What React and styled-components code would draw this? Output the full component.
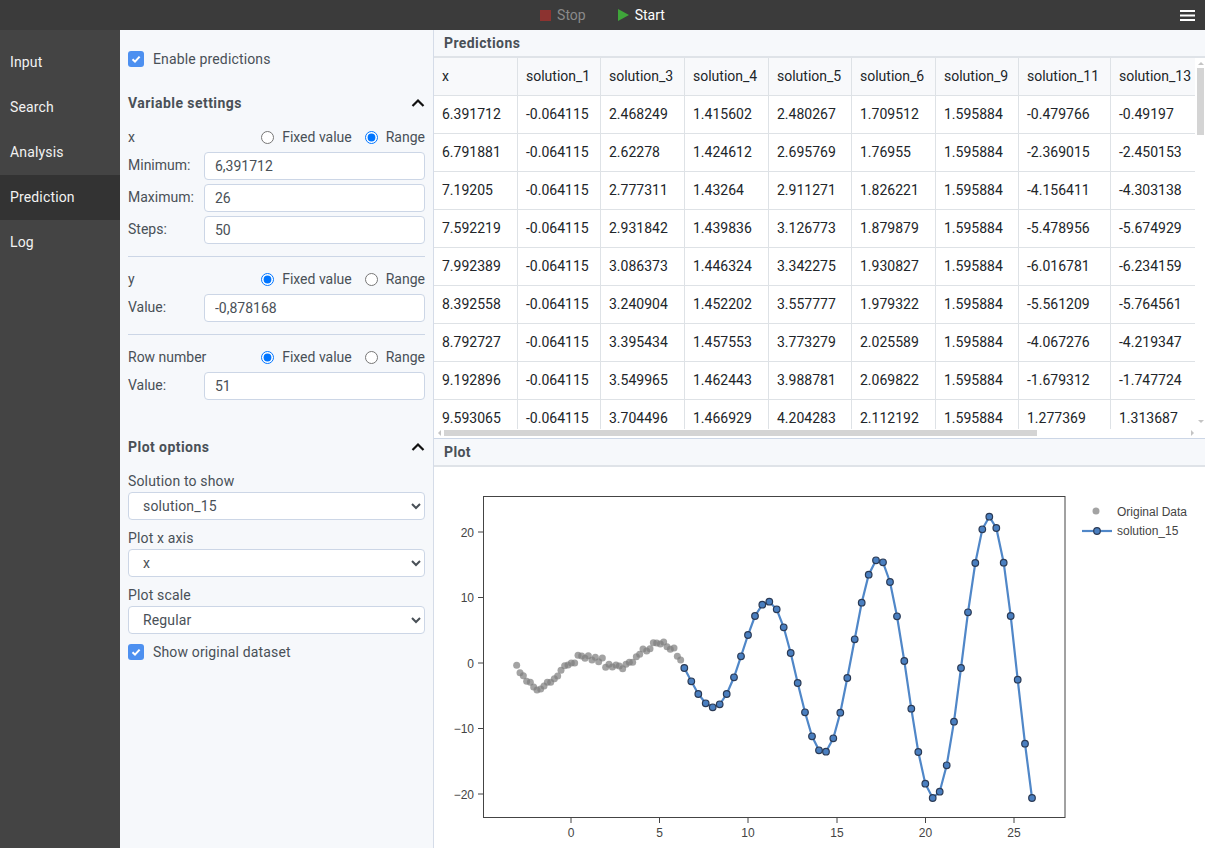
import React from "react";
import { createGlobalStyle, styled } from "styled-components";

const GlobalStyle = createGlobalStyle`
  html, body {
    margin: 0;
    height: 100%;
    overflow: hidden;
    font-family: Roboto, "Noto Sans", sans-serif;
    font-size: 14px;
  }
  * { box-sizing: border-box; }
`;

const Page = styled.div`
  width: 1205px;
  height: 848px;
  display: grid;
  grid-template-rows: 30px 1fr;
  grid-template-columns: 120px 314px 1fr;
`;

/* top bar */
const TopBar = styled.header`
  grid-column: 1 / -1;
  display: grid;
  grid-template-columns: 1fr auto 1fr;
  align-items: center;
  background: #3b3b3b;
`;

const RunControls = styled.div`
  grid-column: 2;
  display: flex;
  gap: 32px;
`;

const RunButton = styled.div`
  display: flex;
  align-items: center;
  gap: 6px;
  color: ${(p) => (p.$disabled ? "#8a8a8a" : "#fff")};
  font-size: 14px;
`;

const StopIcon = styled.span`
  width: 11px;
  height: 11px;
  background: #8c3330;
`;

const PlayIcon = styled.span`
  width: 0;
  height: 0;
  border-left: 11px solid #3fa53a;
  border-top: 6.5px solid transparent;
  border-bottom: 6.5px solid transparent;
`;

const MenuButton = styled.svg`
  justify-self: end;
  margin-right: 10px;
  display: block;
`;

/* side nav */
const Nav = styled.nav`
  background: #444444;
  padding-top: 10px;
`;

const NavItem = styled.div`
  height: 45px;
  padding: 0 0 2px 10px;
  display: flex;
  align-items: center;
  color: #f2f2f2;
  letter-spacing: 0.15px;
  background: ${(p) => (p.$active ? "#333333" : "transparent")};
`;

/* settings column */
const Settings = styled.aside`
  background: #f6f8fb;
  border-right: 1px solid #d5dce8;
  padding: 18px 8px 0;
  color: #495057;
`;

const CheckRow = styled.div`
  display: flex;
  align-items: center;
  gap: 9px;
  height: 22px;
  letter-spacing: 0.15px;
  margin-top: ${(p) => p.$top || 0}px;
`;

const CheckBox = styled.span`
  width: 16px;
  height: 16px;
  border-radius: 3px;
  background: #4d90f0;
  display: flex;
  align-items: center;
  justify-content: center;
`;

const SectionTitle = styled.div`
  display: flex;
  align-items: center;
  justify-content: space-between;
  height: 22px;
  font-weight: 700;
  letter-spacing: 0.45px;
  margin-top: ${(p) => p.$top}px;
  margin-bottom: 12px;
`;

const VarRow = styled.div`
  display: flex;
  align-items: center;
  justify-content: space-between;
  height: 22px;
  margin-bottom: 4px;
`;

const RadioGroup = styled.div`
  display: flex;
  align-items: center;
  gap: 13px;
`;

const RadioLabel = styled.label`
  display: flex;
  align-items: center;
  gap: 8px;
`;

const Radio = styled.input`
  width: 13px;
  height: 13px;
  margin: 0;
`;

const FieldRow = styled.div`
  display: grid;
  grid-template-columns: 76px 1fr;
  align-items: center;
  margin-bottom: 4px;
`;

const FieldLabel = styled.span`
  padding-bottom: 2px;
`;

const TextInput = styled.input`
  height: 28px;
  width: 100%;
  padding: 0 10px;
  border: 1px solid #ccd6e6;
  border-radius: 4px;
  background: #fff;
  color: #495057;
  font: inherit;
`;

const Divider = styled.hr`
  margin: 12px 0 11px;
  border: 0;
  border-top: 1px solid #ccd6e6;
`;

const SelectLabel = styled.div`
  height: 22px;
  display: flex;
  align-items: center;
  letter-spacing: 0.15px;
`;

const Select = styled.select`
  display: block;
  width: 100%;
  height: 28px;
  padding: 0 6px 0 10px;
  margin-bottom: 7px;
  border: 1px solid #ccd6e6;
  border-radius: 4px;
  background: #fff;
  color: #495057;
  font: inherit;
  letter-spacing: 0.15px;
`;

/* right column */
const Results = styled.main`
  display: grid;
  grid-template-rows: 408px 1fr;
  min-width: 0;
  min-height: 0;
`;

const Pane = styled.section`
  display: flex;
  flex-direction: column;
  min-height: 0;
  min-width: 0;
  border-top: ${(p) => (p.$ruled ? "1px solid #ccd6e6" : "none")};
`;

const PaneTitle = styled.div`
  flex: none;
  height: 28px;
  padding-left: 10px;
  display: flex;
  align-items: center;
  font-weight: 700;
  letter-spacing: 0.4px;
  color: #495057;
  background: #f6f8fb;
  border-bottom: 2px solid #dfe3e8;
`;

const TableFrame = styled.div`
  flex: 1;
  min-height: 0;
  display: grid;
  grid-template-columns: 1fr 8px;
  grid-template-rows: 1fr 9px;
`;

const TableClip = styled.div`
  overflow: hidden;
  min-height: 0;
`;

const Table = styled.table`
  border-collapse: separate;
  border-spacing: 0;
  table-layout: fixed;
  width: 761px;
  color: #212529;
`;

const HeadCell = styled.th`
  height: 38px;
  padding: 0 8px 2px;
  text-align: left;
  font-weight: 400;
  white-space: nowrap;
  background: #f8f9fb;
  border-right: 1px solid #dee2e6;
  border-bottom: 1px solid #dee2e6;
  &:last-child { border-right: 0; }
`;

const Cell = styled.td`
  height: 38px;
  padding: 0 8px 2px;
  white-space: nowrap;
  border-right: 1px solid #dee2e6;
  border-bottom: 1px solid #dee2e6;
  &:last-child { border-right: 0; }
`;

const VScrollBar = styled.div`
  display: flex;
  flex-direction: column;
  align-items: stretch;
  padding-right: 1px;
  padding-bottom: 3px;
`;

const HScrollBar = styled.div`
  display: flex;
  align-items: stretch;
  padding: 1px 0 2px;
`;

const Thumb = styled.div`
  flex: none;
  background: #d4d4d4;
  ${(p) => (p.$vertical ? `height: ${p.$size}px;` : `width: ${p.$size}px;`)}
`;

const Track = styled.div`
  flex: 1;
`;

const ArrowButton = styled.div`
  flex: none;
  width: ${(p) => (p.$dir === "up" || p.$dir === "down" ? "auto" : "10px")};
  height: ${(p) => (p.$dir === "up" || p.$dir === "down" ? "10px" : "auto")};
  display: flex;
  align-items: center;
  justify-content: center;

  &::before {
    content: "";
    border: 3px solid transparent;
    ${(p) => (p.$dir === "up" ? "border-top: 0; border-bottom: 3px solid #c4c4c4;" : "")}
    ${(p) => (p.$dir === "down" ? "border-bottom: 0; border-top: 3px solid #c4c4c4;" : "")}
    ${(p) => (p.$dir === "left" ? "border-left: 0; border-right: 3px solid #c4c4c4;" : "")}
    ${(p) => (p.$dir === "right" ? "border-right: 0; border-left: 3px solid #c4c4c4;" : "")}
  }
`;

const PlotArea = styled.div`
  flex: 1;
  min-height: 0;
  background: #fff;
`;

const PlotSvg = styled.svg`
  display: block;
`;

const AxisText = styled.text`
  font-family: "Liberation Sans", Arial, sans-serif;
  font-size: 12px;
  fill: #444444;
`;

const navItems = ["Input", "Search", "Analysis", "Prediction", "Log"];

const columns = [
  ["x", 84],
  ["solution_1", 83],
  ["solution_3", 84],
  ["solution_4", 84],
  ["solution_5", 83],
  ["solution_6", 84],
  ["solution_9", 83],
  ["solution_11", 92],
  ["solution_13", 84],
];

const rows = [
  ["6.391712", "-0.064115", "2.468249", "1.415602", "2.480267", "1.709512", "1.595884", "-0.479766", "-0.49197"],
  ["6.791881", "-0.064115", "2.62278", "1.424612", "2.695769", "1.76955", "1.595884", "-2.369015", "-2.450153"],
  ["7.19205", "-0.064115", "2.777311", "1.43264", "2.911271", "1.826221", "1.595884", "-4.156411", "-4.303138"],
  ["7.592219", "-0.064115", "2.931842", "1.439836", "3.126773", "1.879879", "1.595884", "-5.478956", "-5.674929"],
  ["7.992389", "-0.064115", "3.086373", "1.446324", "3.342275", "1.930827", "1.595884", "-6.016781", "-6.234159"],
  ["8.392558", "-0.064115", "3.240904", "1.452202", "3.557777", "1.979322", "1.595884", "-5.561209", "-5.764561"],
  ["8.792727", "-0.064115", "3.395434", "1.457553", "3.773279", "2.025589", "1.595884", "-4.067276", "-4.219347"],
  ["9.192896", "-0.064115", "3.549965", "1.462443", "3.988781", "2.069822", "1.595884", "-1.679312", "-1.747724"],
  ["9.593065", "-0.064115", "3.704496", "1.466929", "4.204283", "2.112192", "1.595884", "1.277369", "1.313687"],
];

const originalPoints = [
  [140, 136], [150, 158], [160, 167], [170, 184], [181, 187], [191, 201], [201, 210],
  [212, 207], [222, 198], [232, 187], [242, 187], [253, 176], [263, 168], [273, 151],
  [284, 137], [294, 135], [304, 129], [314, 129], [324, 106], [335, 108], [345, 115],
  [355, 107], [366, 120], [376, 112], [386, 125], [397, 114], [407, 142], [417, 133],
  [427, 141], [438, 135], [448, 138], [458, 146], [468, 133], [478, 127], [488, 127],
  [499, 110], [509, 103], [519, 87], [530, 93], [540, 86], [550, 68], [560, 69],
  [571, 72], [581, 66], [591, 80], [601, 88], [612, 84], [622, 109], [632, 120],
].map(([x, y]) => [x / 3 + 470, y / 3 + 620]);

const solutionPoints = [
  [684.3, 668], [691.3, 681.3], [698.3, 694], [705.7, 703.3], [712.7, 707.3], [719.7, 704.3],
  [726.7, 694], [734, 677.3], [741, 656.3], [748, 635], [755, 616], [762.3, 604.7],
  [769.3, 601.7], [776.7, 609.3], [783.7, 627.3], [790.7, 653], [797.7, 683], [805, 712.3],
  [812, 736.3], [819, 750.3], [826, 751.7], [833.3, 738.3], [840.3, 712.7], [847.3, 678],
  [854.7, 639.3], [861.7, 602.7], [868.7, 574.7], [876, 560.3], [883, 562.3], [890, 582],
  [897, 616.3], [904.3, 661], [911.3, 708.7], [918.3, 752], [925.3, 783.7], [932.7, 798],
  [939.7, 791.7], [946.7, 765.3], [954, 721.7], [961, 668], [968, 612.3], [975.3, 563],
  [982.3, 529.3], [989.3, 516.7], [996.3, 528], [1003.7, 562.7], [1010.7, 616], [1017.7, 679.7],
  [1025, 743.7], [1032, 798],
];

const xTicks = [[571, "0"], [659.5, "5"], [748, "10"], [837, "15"], [925.5, "20"], [1014, "25"]];
const yTicks = [[532, "20"], [597.5, "10"], [663, "0"], [728.5, "−10"], [794, "−20"]];

function Chevron() {
  return (
    <svg width="14" height="14" viewBox="0 0 14 14" fill="none" stroke="#111" strokeWidth="2.2">
      <path d="M1.5 10 L7 4.5 L12.5 10" />
    </svg>
  );
}

function VarHeader({ name, mode }) {
  return (
    <VarRow>
      <span>{name}</span>
      <RadioGroup>
        <RadioLabel>
          <Radio type="radio" name={name} defaultChecked={mode === "fixed"} />
          Fixed value
        </RadioLabel>
        <RadioLabel>
          <Radio type="radio" name={name} defaultChecked={mode === "range"} />
          Range
        </RadioLabel>
      </RadioGroup>
    </VarRow>
  );
}

function Field({ label, value }) {
  return (
    <FieldRow>
      <FieldLabel>{label}</FieldLabel>
      <TextInput defaultValue={value} />
    </FieldRow>
  );
}

function Check({ label, top }) {
  return (
    <CheckRow $top={top}>
      <CheckBox>
        <svg width="10" height="10" viewBox="0 0 10 10" fill="none" stroke="#fff" strokeWidth="2">
          <path d="M1.5 5.2 L4 7.6 L8.6 2.6" />
        </svg>
      </CheckBox>
      {label}
    </CheckRow>
  );
}

function SelectField({ label, value }) {
  return (
    <>
      <SelectLabel>{label}</SelectLabel>
      <Select defaultValue={value}>
        <option>{value}</option>
      </Select>
    </>
  );
}

function Plot() {
  const line = solutionPoints.map(([x, y]) => `${x},${y}`).join(" ");
  return (
    <PlotSvg width="771" height="381" viewBox="434 467 771 381">
      <rect x="483.5" y="496.5" width="581.5" height="321" fill="none" stroke="#444" />
      {xTicks.map(([x, label]) => (
        <g key={label}>
          <line x1={x} x2={x} y1="818" y2="823" stroke="#444" />
          <AxisText x={x} y="837" textAnchor="middle">{label}</AxisText>
        </g>
      ))}
      {yTicks.map(([y, label]) => (
        <g key={label}>
          <line x1="478" x2="483" y1={y} y2={y} stroke="#444" />
          <AxisText x="474" y={y + 4.5} textAnchor="end">{label}</AxisText>
        </g>
      ))}
      {originalPoints.map(([x, y], i) => (
        <circle key={i} cx={x} cy={y} r="3.5" fill="#7f7f7f" fillOpacity="0.72" />
      ))}
      <polyline points={line} fill="none" stroke="#5087c8" strokeWidth="2.2" />
      {solutionPoints.map(([x, y], i) => (
        <circle key={i} cx={x} cy={y} r="3.3" fill="#4a7fc0" stroke="#2a3a55" strokeWidth="1.2" />
      ))}
      <circle cx="1096" cy="511" r="3.5" fill="#7f7f7f" fillOpacity="0.72" />
      <AxisText x="1117" y="516">Original Data</AxisText>
      <line x1="1082" x2="1112" y1="531" y2="531" stroke="#5087c8" strokeWidth="2.2" />
      <circle cx="1097" cy="531" r="3.3" fill="#4a7fc0" stroke="#2a3a55" strokeWidth="1.2" />
      <AxisText x="1117" y="535">solution_15</AxisText>
    </PlotSvg>
  );
}

export default function App() {
  return (
    <Page>
      <GlobalStyle />
      <TopBar>
        <RunControls>
          <RunButton $disabled>
            <StopIcon />
            Stop
          </RunButton>
          <RunButton>
            <PlayIcon />
            Start
          </RunButton>
        </RunControls>
        <MenuButton width="15" height="13" viewBox="0 0 15 13" fill="none" stroke="#fff" strokeWidth="2">
          <path d="M0 2 H15 M0 6.5 H15 M0 11 H15" />
        </MenuButton>
      </TopBar>

      <Nav>
        {navItems.map((item) => (
          <NavItem key={item} $active={item === "Prediction"}>{item}</NavItem>
        ))}
      </Nav>

      <Settings>
        <Check label="Enable predictions" />
        <SectionTitle $top={22}>
          Variable settings
          <Chevron />
        </SectionTitle>
        <VarHeader name="x" mode="range" />
        <Field label="Minimum:" value="6,391712" />
        <Field label="Maximum:" value="26" />
        <Field label="Steps:" value="50" />
        <Divider />
        <VarHeader name="y" mode="fixed" />
        <Field label="Value:" value="-0,878168" />
        <Divider />
        <VarHeader name="Row number" mode="fixed" />
        <Field label="Value:" value="51" />
        <SectionTitle $top={36}>
          Plot options
          <Chevron />
        </SectionTitle>
        <SelectField label="Solution to show" value="solution_15" />
        <SelectField label="Plot x axis" value="x" />
        <SelectField label="Plot scale" value="Regular" />
        <Check label="Show original dataset" top={3} />
      </Settings>

      <Results>
        <Pane>
          <PaneTitle>Predictions</PaneTitle>
          <TableFrame>
            <TableClip>
              <Table>
                <colgroup>
                  {columns.map(([name, width]) => (
                    <col key={name} width={width} />
                  ))}
                </colgroup>
                <thead>
                  <tr>
                    {columns.map(([name]) => (
                      <HeadCell key={name}>{name}</HeadCell>
                    ))}
                  </tr>
                </thead>
                <tbody>
                  {rows.map((row, r) => (
                    <tr key={r}>
                      {row.map((value, c) => (
                        <Cell key={c}>{value}</Cell>
                      ))}
                    </tr>
                  ))}
                </tbody>
              </Table>
            </TableClip>
            <VScrollBar>
              <ArrowButton $dir="up" />
              <Thumb $vertical $size={67} />
              <Track />
              <ArrowButton $dir="down" />
            </VScrollBar>
            <HScrollBar>
              <ArrowButton $dir="left" />
              <Thumb $size={593} />
              <Track />
              <ArrowButton $dir="right" />
            </HScrollBar>
          </TableFrame>
        </Pane>
        <Pane $ruled>
          <PaneTitle>Plot</PaneTitle>
          <PlotArea>
            <Plot />
          </PlotArea>
        </Pane>
      </Results>
    </Page>
  );
}
